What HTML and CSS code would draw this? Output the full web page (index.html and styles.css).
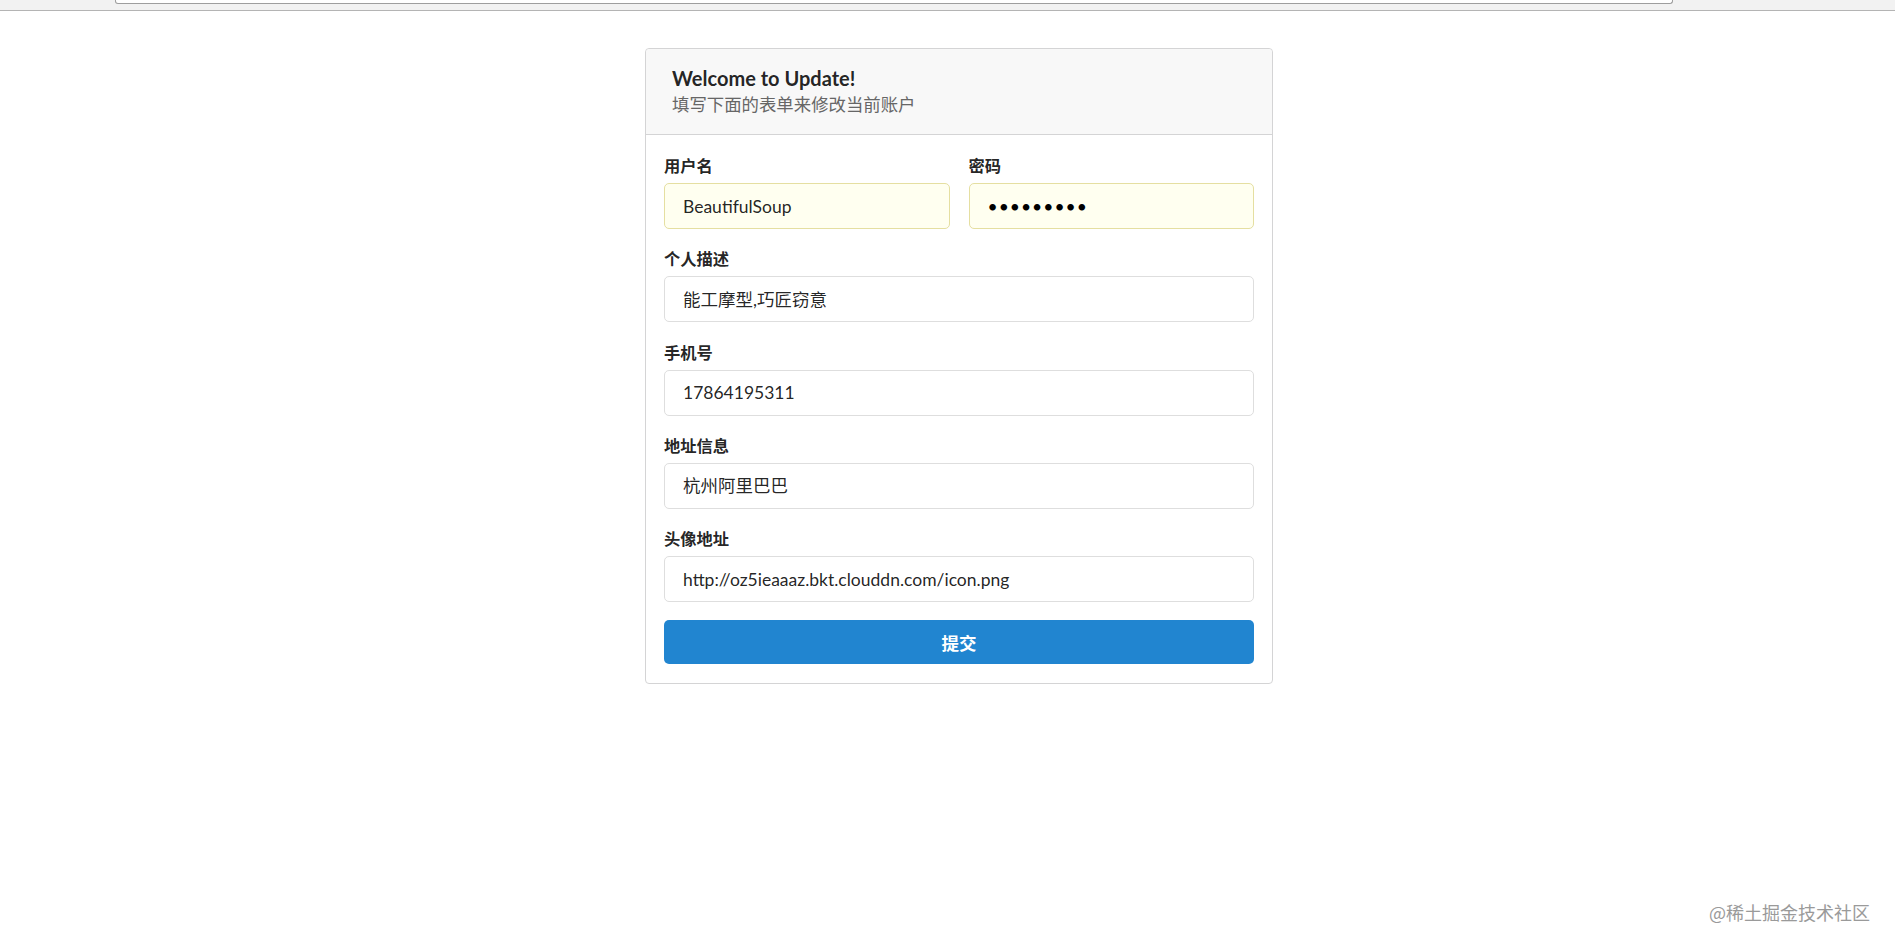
FILE: index.html
```html
<!DOCTYPE html>
<html lang="zh-CN">
<head>
  <meta charset="UTF-8" />
  <meta name="viewport" content="width=device-width, initial-scale=1.0" />
  <title>Update</title>
  <link rel="stylesheet" href="styles.css">
</head>
<body>

<div class="topbar">
  <div class="urlbar"></div>
</div>

<div class="page">
  <div class="card">
    <div class="card-header">
      <div class="title">Welcome to Update!</div>
      <p class="subtitle">填写下面的表单来修改当前账户</p>
    </div>
    <form class="form" onsubmit="return false">
      <div class="two fields">
        <div class="field">
          <label>用户名</label>
          <input class="autofill" type="text" value="BeautifulSoup">
        </div>
        <div class="field">
          <label>密码</label>
          <input class="autofill password" type="password" value="123456789">
        </div>
      </div>
      <div class="field">
        <label>个人描述</label>
        <input type="text" value="能工摩型,巧匠窃意">
      </div>
      <div class="field">
        <label>手机号</label>
        <input type="text" value="17864195311">
      </div>
      <div class="field">
        <label>地址信息</label>
        <input type="text" value="杭州阿里巴巴">
      </div>
      <div class="field">
        <label>头像地址</label>
        <input type="text" value="http://oz5ieaaaz.bkt.clouddn.com/icon.png">
      </div>
      <button class="submit" type="submit">提交</button>
    </form>
  </div>
</div>

<div class="watermark">@稀土掘金技术社区</div>

</body>
</html>
```

FILE: styles.css
```css
body {
  margin: 0;
  font-family: Lato, 'Noto Sans CJK SC', sans-serif;
  font-size: 17px;
  color: rgba(0,0,0,0.87);
  background: #fff;
}
.topbar {
  height: 10px;
  background: #f2f2f2;
  border-bottom: 1px solid #b4b4b4;
  padding: 0 222px 0 115px;
}
.urlbar {
  height: 3px;
  background: #fff;
  border: 1px solid #9e9e9e;
  border-top: none;
  border-radius: 0 0 3px 3px;
}
.page {
  display: flex;
  justify-content: center;
  padding: 37px 0 0 23px;
}
.card {
  width: 626px;
  border: 1px solid #d4d4d5;
  border-radius: 4px;
}
.card-header {
  background: #f8f8f8;
  border-bottom: 1px solid #d4d4d5;
  border-radius: 4px 4px 0 0;
  padding: 17px 26px 17px 26px;
}
.title {
  font-size: 20px;
  font-weight: 700;
  line-height: 24px;
  color: rgba(0,0,0,0.87);
}
.subtitle {
  margin: 3px 0 0;
  font-size: 17.4px;
  line-height: 24px;
  color: #666;
}
.form {
  padding: 19px 18px 19px;
}
.two.fields {
  display: flex;
  gap: 19px;
}
.two.fields .field {
  flex: 1;
}
.field {
  margin-bottom: 18.3px;
}
.field label {
  display: block;
  font-size: 16.3px;
  font-weight: 700;
  line-height: 23px;
  margin-bottom: 6px;
  color: rgba(0,0,0,0.87);
}
.field input {
  display: block;
  width: 100%;
  box-sizing: border-box;
  margin: 0;
  padding: 11.5px 17px 11.5px 18px;
  font-family: Lato, 'Noto Sans CJK SC', sans-serif;
  font-size: 17.5px;
  line-height: 21px;
  color: rgba(0,0,0,0.87);
  background: #fff;
  border: 1px solid #dedede;
  border-radius: 5px;
  outline: none;
}
.field input.autofill {
  background: #fffff0;
  border-color: #e5dfa1;
}
.field input.password {
  color: #000;
  letter-spacing: 1px;
}
.submit {
  display: block;
  width: 100%;
  height: 44px;
  padding: 0;
  border: none;
  border-radius: 5px;
  background: #2185d0;
  color: #fff;
  font-family: Lato, 'Noto Sans CJK SC', sans-serif;
  font-size: 17.5px;
  font-weight: 700;
  cursor: pointer;
}
.watermark {
  position: absolute;
  right: 25px;
  top: 899px;
  font-family: 'Noto Sans CJK SC', sans-serif;
  font-size: 18px;
  color: #9a9a9a;
}
```
